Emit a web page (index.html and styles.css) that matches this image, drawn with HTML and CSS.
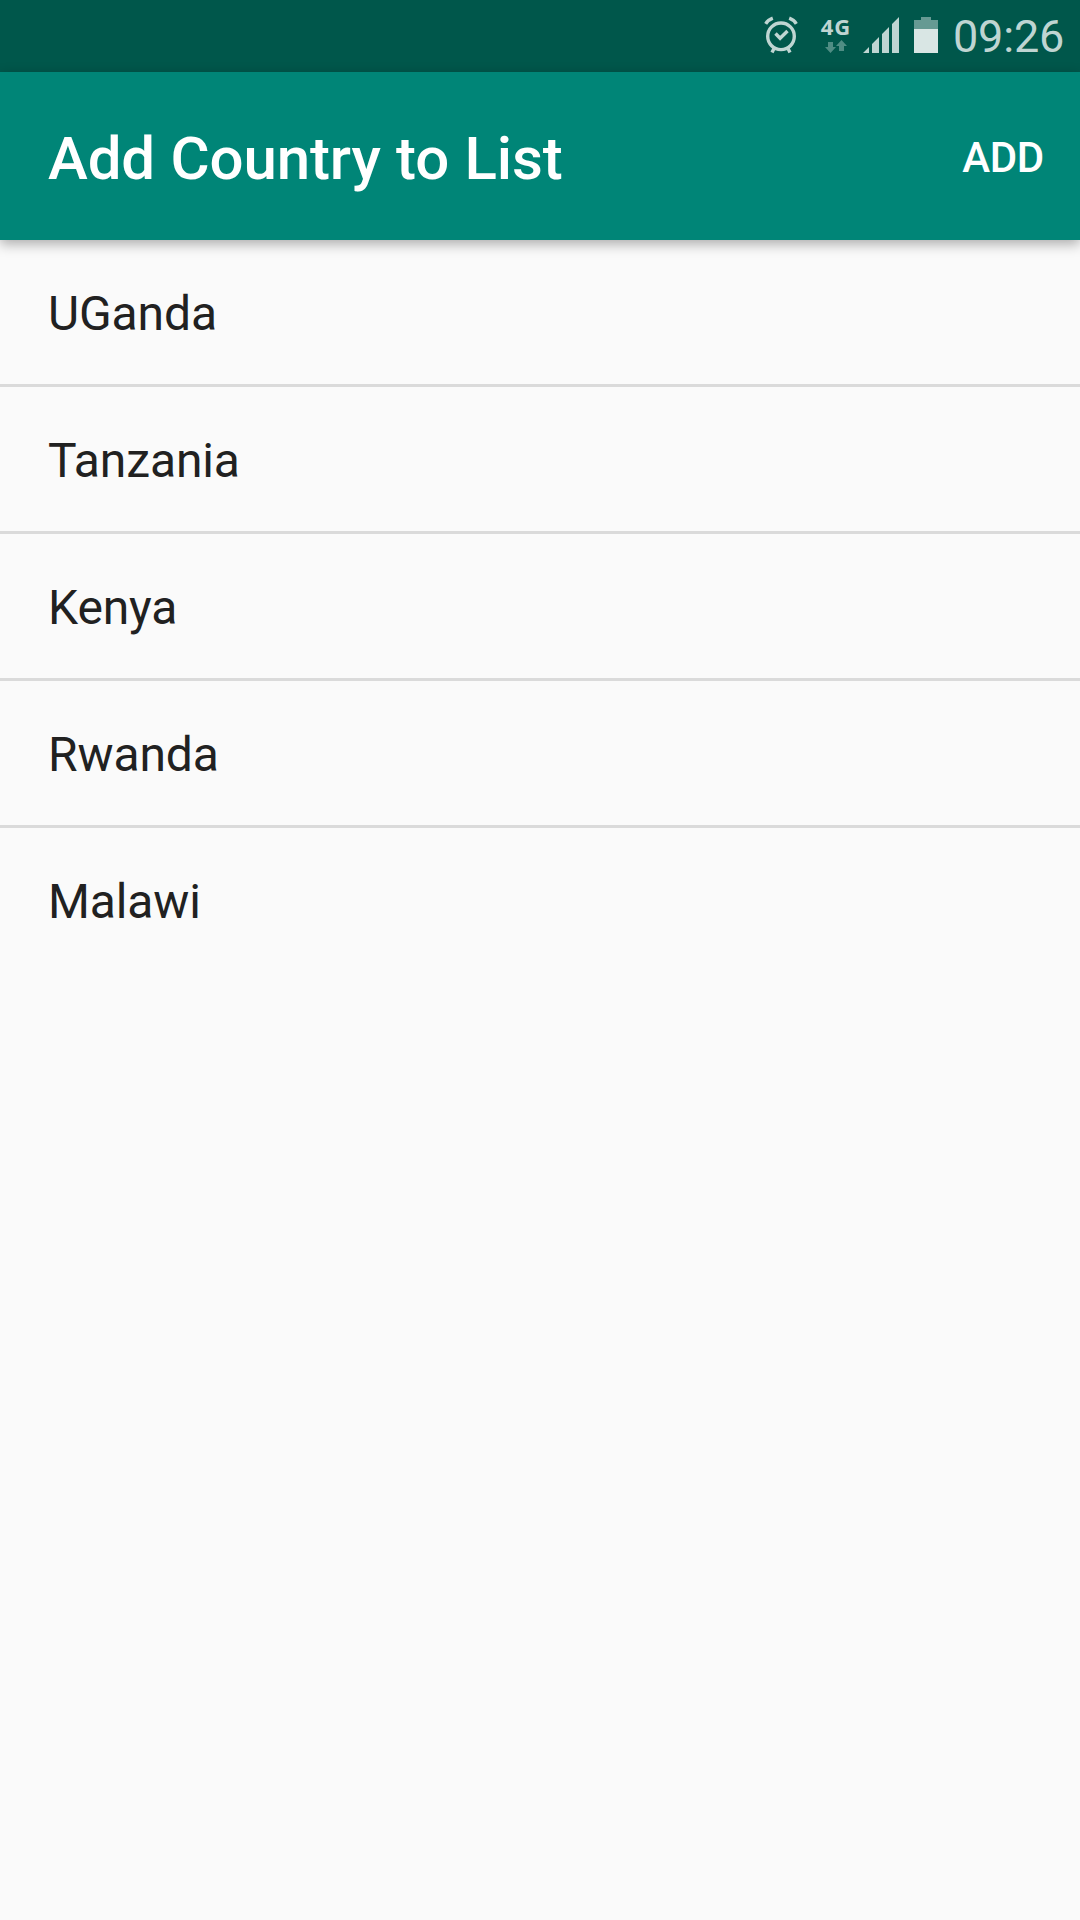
FILE: index.html
```html
<!DOCTYPE html>
<html lang="en">
<head>
<meta charset="utf-8">
<title>Add Country to List</title>
<link rel="stylesheet" href="styles.css">
</head>
<body>
<div class="status">
  <svg class="alarm" width="34" height="40" viewBox="0 0 34 40" fill="none" stroke="currentColor" stroke-width="3.4"><circle cx="17" cy="21.3" r="13.3"/><path d="M11.5 18.5l4.6 4.8 7.4-7.3M1.700 8.800Q4 5 8.800 3.200M32.300 8.800Q30 5 25.200 3.200M10 33.500l-2 4M24 33.500l2 4"/></svg>
  <div class="network"><span class="network-type">4G</span>
    <svg class="arrows" width="22" height="13" viewBox="0 0 22 13" fill="currentColor"><path d="M3 2h5v5h3l-5.500 6L0 7h3zM14 11h5V6h3l-5.500-6L11 6h3z"/></svg></div>
  <svg class="signal" width="36" height="36" viewBox="0 0 36 36" fill="currentColor"><path d="M0 36l6-6v6zM9 27l7-7v16H9zM19 17l7-7v26h-7zM29 7l7-7v36h-7z"/></svg>
  <svg class="battery" width="24" height="36" viewBox="0 0 24 36"><path class="battery-empty" d="M7 0h10v3h7v9H0V3h7z"/><path class="battery-full" d="M0 12h24v24H0z"/></svg>
  <span class="clock">09:26</span>
</div>
<header class="toolbar"><h1 class="title">Add Country to List</h1><button class="add">ADD</button></header>
<ul class="list"><li>UGanda</li><li>Tanzania</li><li>Kenya</li><li>Rwanda</li><li>Malawi</li></ul>
</body>
</html>
```

FILE: styles.css
```css
* { box-sizing: border-box; }
body { margin: 0; min-height: 1920px; background: #fafafa; font-family: Roboto, sans-serif; color: #212121; }
.status { height: 72px; background: #00574b; color: #bfd5d2; display: flex; align-items: flex-start; padding-left: 764px; }
.status svg { flex: none; }
.alarm { margin-top: 15px; }
.network { width: 32px; margin: 16px 0 0 22px; display: flex; flex-direction: column; align-items: center; }
.network-type { font: bold 22px/21px "Open Sans", "Noto Sans", sans-serif; letter-spacing: 1px; }
.arrows { margin-top: 3px; color: #4f8d84; }
.signal { margin: 17px 0 0 11px; }
.battery { margin: 17px 0 0 15px; }
.battery-empty { fill: #669a93; }
.battery-full { fill: #d9e6e4; }
.clock { margin: 10px 0 0 15px; font-size: 45px; line-height: 53px; letter-spacing: -0.2px; }
.toolbar { position: relative; height: 168px; background: #008577; color: #fff; display: flex; align-items: center; justify-content: space-between; padding: 3px 36px 0 48px; box-shadow: 0 4px 12px rgba(0,0,0,.32); }
.title { margin: 2px 0 0; font-size: 60px; font-weight: 500; letter-spacing: -0.12px; word-spacing: 0.6px; }
.add { border: 0; padding: 0; background: none; color: inherit; font: 500 42px Roboto, sans-serif; letter-spacing: -0.3px; }
.list { margin: 0; padding: 0; list-style: none; }
.list li { height: 147px; padding-left: 48px; line-height: 147px; font-size: 48px; letter-spacing: -0.12px; border-bottom: 3px solid #dadada; }
.list li:last-child { border: 0; }
```
